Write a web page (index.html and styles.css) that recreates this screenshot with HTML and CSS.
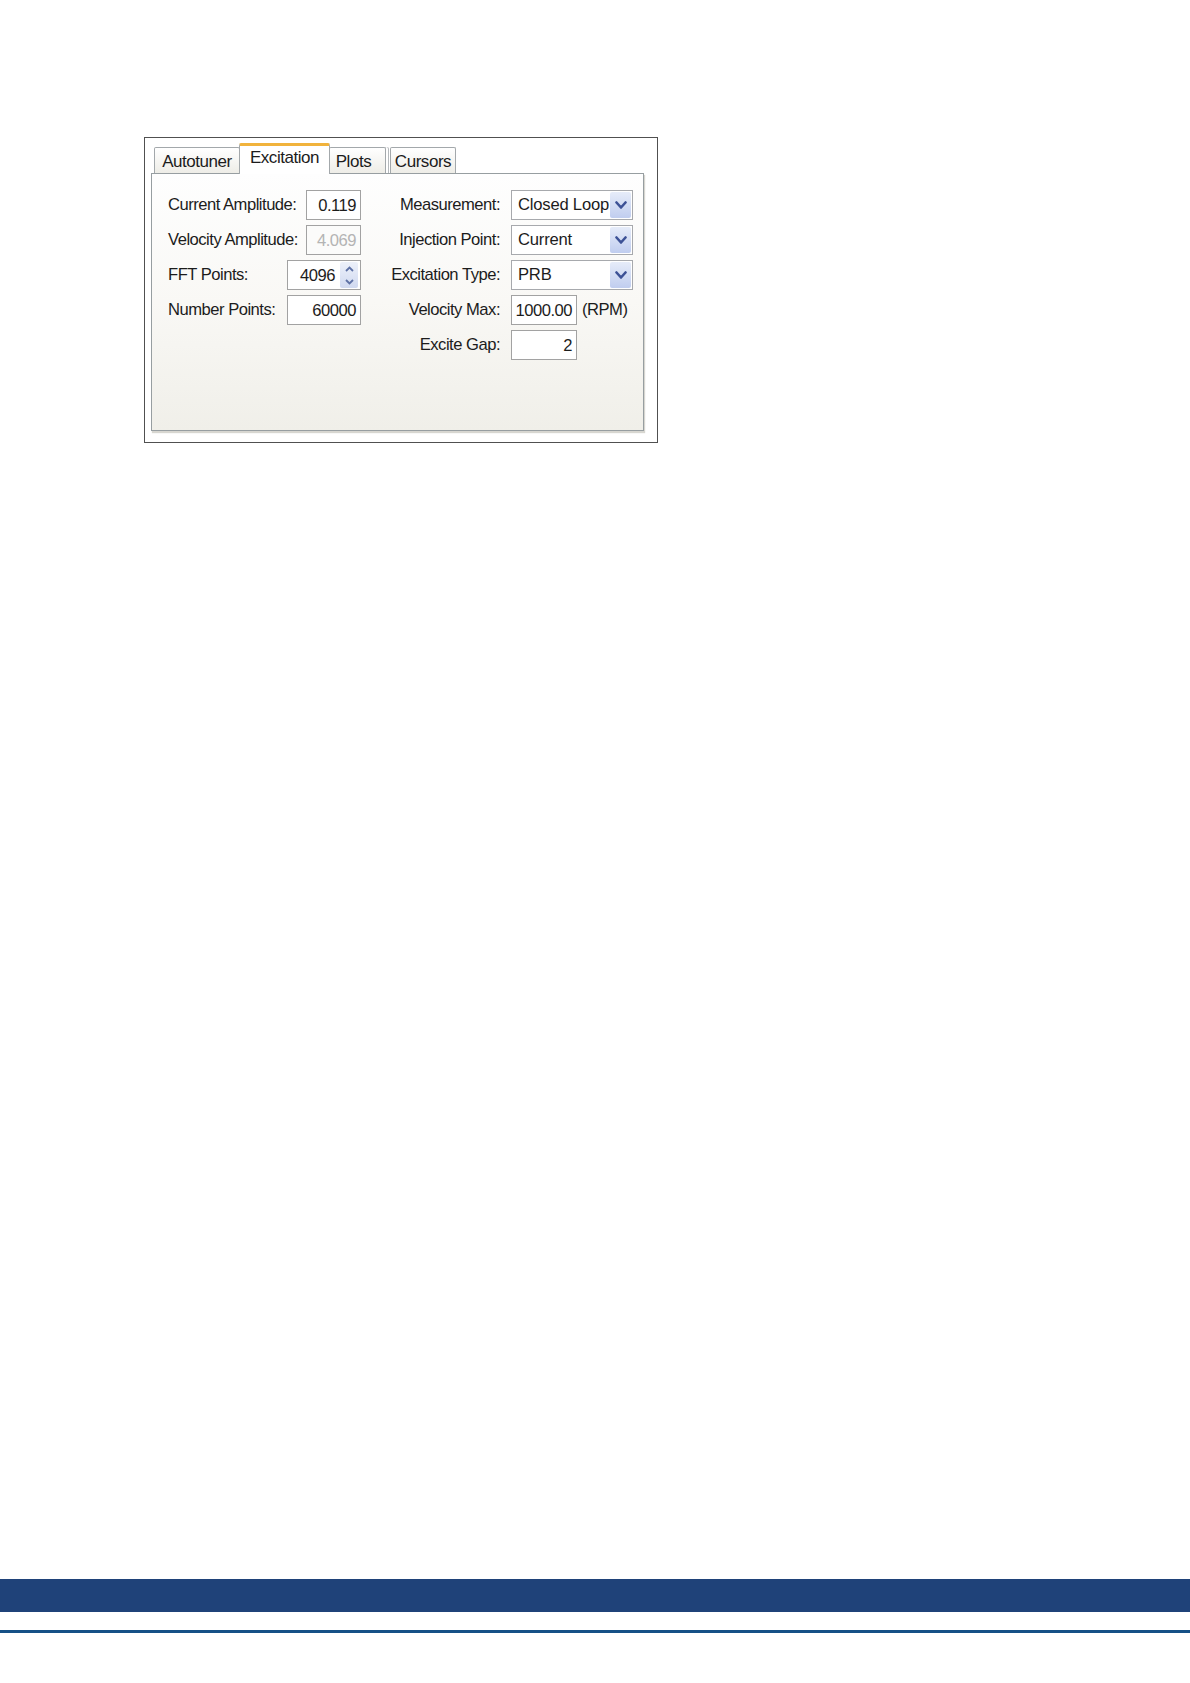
FILE: index.html
```
<!DOCTYPE html>
<html>
<head>
<meta charset="utf-8">
<link rel="stylesheet" href="styles.css">
</head>
<body>
<div class="page">
  <div class="frame">
    <div class="tabs">
      <div class="tab t-auto">Autotuner</div>
      <div class="tab tab-sel t-exc">Excitation</div>
      <div class="tab t-plots">Plots</div>
      <div class="tab t-cur">Cursors</div>
    </div>
    <div class="panel">
      <div class="grid">
        <div class="lbl">Current Amplitude:</div>
        <div class="inp w55">0.119</div>
        <div class="rlbl">Measurement:</div>
        <div class="combo"><span class="ctext">Closed Loop</span><span class="cbtn"><svg width="12" height="9" viewBox="0 0 12 9"><path d="M1.5 1.5 L6 6.5 L10.5 1.5" fill="none" stroke="#3d5296" stroke-width="2.6" stroke-linecap="round" stroke-linejoin="round"/></svg></span></div>

        <div class="lbl">Velocity Amplitude:</div>
        <div class="inp w55 dis">4.069</div>
        <div class="rlbl">Injection Point:</div>
        <div class="combo"><span class="ctext">Current</span><span class="cbtn"><svg width="12" height="9" viewBox="0 0 12 9"><path d="M1.5 1.5 L6 6.5 L10.5 1.5" fill="none" stroke="#3d5296" stroke-width="2.6" stroke-linecap="round" stroke-linejoin="round"/></svg></span></div>

        <div class="lbl">FFT Points:</div>
        <div class="inp w74 spin"><span class="stext">4096</span><span class="sbtns"><span class="sb"><svg width="9" height="6" viewBox="0 0 9 6"><path d="M1 5 L4.5 1.5 L8 5" fill="none" stroke="#5f72a6" stroke-width="1.8"/></svg></span><span class="sb"><svg width="9" height="6" viewBox="0 0 9 6"><path d="M1 1 L4.5 4.5 L8 1" fill="none" stroke="#5f72a6" stroke-width="1.8"/></svg></span></span></div>
        <div class="rlbl">Excitation Type:</div>
        <div class="combo"><span class="ctext">PRB</span><span class="cbtn"><svg width="12" height="9" viewBox="0 0 12 9"><path d="M1.5 1.5 L6 6.5 L10.5 1.5" fill="none" stroke="#3d5296" stroke-width="2.6" stroke-linecap="round" stroke-linejoin="round"/></svg></span></div>

        <div class="lbl">Number Points:</div>
        <div class="inp w74">60000</div>
        <div class="rlbl">Velocity Max:</div>
        <div class="withunit"><div class="inp w66">1000.00</div><span class="unit">(RPM)</span></div>

        <div class="lbl"></div>
        <div></div>
        <div class="rlbl">Excite Gap:</div>
        <div class="inp w66">2</div>
      </div>
    </div>
  </div>
  <div class="band"></div>
  <div class="rule"></div>
</div>
</body>
</html>
```
FILE: styles.css
```
html, body {
  margin: 0;
  padding: 0;
  background: #ffffff;
}
body {
  font-family: "Liberation Sans", Arial, sans-serif;
  color: #1c1c1c;
}
.page {
  width: 1190px;
  padding-top: 137px;
}
.frame {
  box-sizing: border-box;
  margin-left: 144px;
  width: 514px;
  height: 306px;
  border: 1px solid #505050;
  background: #ffffff;
  padding: 5px 12px 10px 6px;
}
.tabs {
  display: flex;
  align-items: flex-end;
  height: 31px;
  margin-left: 3px;
}
.tab {
  box-sizing: border-box;
  height: 26px;
  margin-bottom: 1px;
  border: 1px solid #a3a8ab;
  border-bottom: none;
  border-radius: 2px 2px 0 0;
  background: linear-gradient(#ffffff, #eeede7);
  font-size: 17px;
  letter-spacing: -0.45px;
  line-height: 27px;
  text-align: center;
  color: #1c1c1c;
}
.t-auto { width: 86px; }
.t-exc { width: 91px; }
.t-plots { width: 57px; margin-right: 4px; box-shadow: 2px 0 0 #ffffff, 3px 0 0 #b5b9bc; padding-right: 8px; }
.t-cur { width: 66px; }
.tab-sel {
  position: relative;
  z-index: 1;
  height: 31px;
  margin-bottom: 0;
  background: #ffffff;
  border-top: 3px solid #f1b33c;
  border-left: 1px solid #a3a8ab;
  border-right: 1px solid #a3a8ab;
  line-height: 24px;
  margin-left: -1px;
  margin-right: -1px;
}
.panel {
  box-sizing: border-box;
  width: 493px;
  height: 258px;
  margin-top: -1px;
  border: 1px solid #979ea1;
  background: linear-gradient(#fefefe 0%, #f9f8f5 50%, #f0efe9 100%);
  box-shadow: 1px 2px 1px #d7d6d0;
  padding: 16px 0 0 15px;
}
.grid {
  display: grid;
  grid-template-columns: 120px 74px 150px 122px;
  grid-auto-rows: 30px;
  row-gap: 5px;
  align-items: center;
}
.lbl, .rlbl, .inp, .ctext, .unit {
  font-size: 16.6px;
  letter-spacing: -0.5px;
}
.lbl {
  white-space: nowrap;
  margin-left: 1px;
}
.rlbl {
  text-align: right;
  padding-right: 11px;
  white-space: nowrap;
}
.inp {
  box-sizing: border-box;
  height: 30px;
  border: 1px solid #a2a2a2;
  background: #ffffff;
  line-height: 29px;
  text-align: right;
  padding-right: 4px;
  justify-self: end;
}
.w55 { width: 55px; }
.w74 { width: 74px; }
.w66 { width: 66px; justify-self: start; }
.dis { color: #b4b4b4; background: #fbfbfa; }
.spin {
  display: flex;
  align-items: center;
  justify-content: flex-end;
  padding-right: 2px;
}
.stext { margin-right: 5px; }
.sbtns {
  display: flex;
  flex-direction: column;
  width: 18px;
  height: 26px;
  border-radius: 2px;
  background: linear-gradient(#edf1fa, #d0d9f0);
}
.sb {
  flex: 1;
  display: flex;
  align-items: center;
  justify-content: center;
}
.combo {
  box-sizing: border-box;
  width: 122px;
  height: 30px;
  border: 1px solid #a7a9ad;
  background: #ffffff;
  display: flex;
  align-items: center;
  padding: 1px;
}
.ctext {
  flex: 1;
  min-width: 0;
  overflow: hidden;
  white-space: nowrap;
  padding-left: 5px;
  letter-spacing: -0.2px;
  line-height: 28px;
}
.cbtn {
  flex: none;
  width: 21px;
  height: 26px;
  border-radius: 2px;
  background: linear-gradient(#e6ecf9, #c0cdef);
  display: flex;
  align-items: center;
  justify-content: center;
}
.withunit {
  display: flex;
  align-items: center;
  white-space: nowrap;
}
.unit {
  margin-left: 5px;
}
.band {
  margin-top: 1136px;
  height: 33px;
  background: #1f4279;
}
.rule {
  margin-top: 18px;
  height: 3px;
  background: #155086;
}
```
